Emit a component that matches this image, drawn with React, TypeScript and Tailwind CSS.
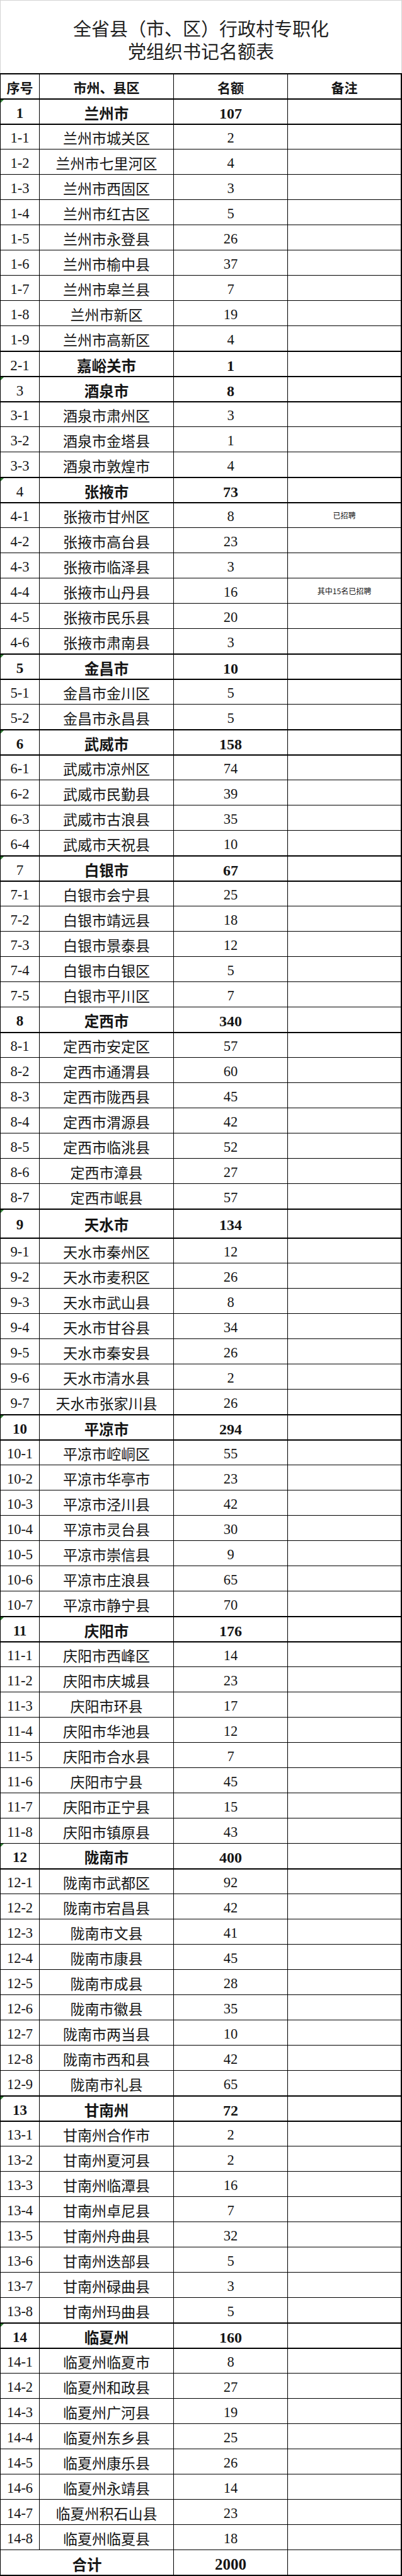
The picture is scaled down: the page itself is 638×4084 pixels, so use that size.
import React from "react";

type Item = [string, string, string?];
type Group = {
  seq: string;
  name: string;
  num: string;
  sb?: boolean;
  tri?: boolean;
  thinTop?: boolean;
  tall?: boolean;
  items: Item[];
};

const groups: Group[] = [
  {
    seq: "1", name: "兰州市", num: "107", sb: true, tri: true,
    items: [
      ["兰州市城关区", "2"], ["兰州市七里河区", "4"], ["兰州市西固区", "3"], ["兰州市红古区", "5"],
      ["兰州市永登县", "26"], ["兰州市榆中县", "37"], ["兰州市皋兰县", "7"], ["兰州市新区", "19"], ["兰州市高新区", "4"],
    ],
  },
  { seq: "2-1", name: "嘉峪关市", num: "1", items: [] },
  {
    seq: "3", name: "酒泉市", num: "8", tri: true,
    items: [["酒泉市肃州区", "3"], ["酒泉市金塔县", "1"], ["酒泉市敦煌市", "4"]],
  },
  {
    seq: "4", name: "张掖市", num: "73", tri: true,
    items: [
      ["张掖市甘州区", "8", "已招聘"], ["张掖市高台县", "23"], ["张掖市临泽县", "3"],
      ["张掖市山丹县", "16", "其中15名已招聘"], ["张掖市民乐县", "20"], ["张掖市肃南县", "3"],
    ],
  },
  { seq: "5", name: "金昌市", num: "10", sb: true, tri: true, items: [["金昌市金川区", "5"], ["金昌市永昌县", "5"]] },
  {
    seq: "6", name: "武威市", num: "158", sb: true, tri: true,
    items: [["武威市凉州区", "74"], ["武威市民勤县", "39"], ["武威市古浪县", "35"], ["武威市天祝县", "10"]],
  },
  {
    seq: "7", name: "白银市", num: "67", tri: true,
    items: [["白银市会宁县", "25"], ["白银市靖远县", "18"], ["白银市景泰县", "12"], ["白银市白银区", "5"], ["白银市平川区", "7"]],
  },
  {
    seq: "8", name: "定西市", num: "340", sb: true, thinTop: true,
    items: [
      ["定西市安定区", "57"], ["定西市通渭县", "60"], ["定西市陇西县", "45"], ["定西市渭源县", "42"],
      ["定西市临洮县", "52"], ["定西市漳县", "27"], ["定西市岷县", "57"],
    ],
  },
  {
    seq: "9", name: "天水市", num: "134", sb: true, tri: true, tall: true,
    items: [
      ["天水市秦州区", "12"], ["天水市麦积区", "26"], ["天水市武山县", "8"], ["天水市甘谷县", "34"],
      ["天水市秦安县", "26"], ["天水市清水县", "2"], ["天水市张家川县", "26"],
    ],
  },
  {
    seq: "10", name: "平凉市", num: "294", sb: true, tri: true,
    items: [
      ["平凉市崆峒区", "55"], ["平凉市华亭市", "23"], ["平凉市泾川县", "42"], ["平凉市灵台县", "30"],
      ["平凉市崇信县", "9"], ["平凉市庄浪县", "65"], ["平凉市静宁县", "70"],
    ],
  },
  {
    seq: "11", name: "庆阳市", num: "176", sb: true, tri: true,
    items: [
      ["庆阳市西峰区", "14"], ["庆阳市庆城县", "23"], ["庆阳市环县", "17"], ["庆阳市华池县", "12"],
      ["庆阳市合水县", "7"], ["庆阳市宁县", "45"], ["庆阳市正宁县", "15"], ["庆阳市镇原县", "43"],
    ],
  },
  {
    seq: "12", name: "陇南市", num: "400", sb: true, tri: true, thinTop: true,
    items: [
      ["陇南市武都区", "92"], ["陇南市宕昌县", "42"], ["陇南市文县", "41"], ["陇南市康县", "45"],
      ["陇南市成县", "28"], ["陇南市徽县", "35"], ["陇南市两当县", "10"], ["陇南市西和县", "42"], ["陇南市礼县", "65"],
    ],
  },
  {
    seq: "13", name: "甘南州", num: "72", sb: true, tri: true,
    items: [
      ["甘南州合作市", "2"], ["甘南州夏河县", "2"], ["甘南州临潭县", "16"], ["甘南州卓尼县", "7"],
      ["甘南州舟曲县", "32"], ["甘南州迭部县", "5"], ["甘南州碌曲县", "3"], ["甘南州玛曲县", "5"],
    ],
  },
  {
    seq: "14", name: "临夏州", num: "160", sb: true, tri: true,
    items: [
      ["临夏州临夏市", "8"], ["临夏州和政县", "27"], ["临夏州广河县", "19"], ["临夏州东乡县", "25"],
      ["临夏州康乐县", "26"], ["临夏州永靖县", "14"], ["临夏州积石山县", "23"], ["临夏州临夏县", "18"],
    ],
  },
];

const cell = "flex items-center justify-center border-r border-black";

function Tri() {
  return (
    <div className="absolute left-0 top-0 h-0 w-0 border-t-[5px] border-r-[5px] border-t-[#2e7d32] border-r-transparent" />
  );
}

function GroupRow({ g }: { g: Group }) {
  return (
    <div
      className={`relative grid grid-cols-[62px_213px_181px_1fr] border-l border-r-2 border-black ${
        g.thinTop ? "border-t" : "border-t-2"
      } ${g.tall ? "h-[46px]" : "h-[40px]"}`}
    >
      {g.tri && <Tri />}
      <div
        className={`${cell} pt-[4px] font-['Liberation_Serif','Noto_Sans_CJK_SC',serif] text-[23px] ${
          g.sb ? "font-bold" : "font-normal"
        }`}
      >
        {g.seq}
      </div>
      <div className={`${cell} pt-[3px] font-['Noto_Sans_CJK_SC',sans-serif] text-[23.5px] font-bold`}>{g.name}</div>
      <div className={`${cell} pt-[4px] font-['Liberation_Serif',serif] text-[24px] font-bold`}>{g.num}</div>
      <div className="flex items-center justify-center" />
    </div>
  );
}

function ItemRow({ seq, item, thick }: { seq: string; item: Item; thick: boolean }) {
  return (
    <div
      className={`relative grid h-[40px] grid-cols-[62px_213px_181px_1fr] border-l border-r-2 border-black ${
        thick ? "border-t-2" : "border-t"
      }`}
    >
      <div className={`${cell} pt-[4px] font-['Liberation_Serif',serif] text-[22.5px]`}>{seq}</div>
      <div className={`${cell} pt-[3px] font-['Noto_Sans_CJK_SC',sans-serif] text-[23px] font-normal`}>{item[0]}</div>
      <div className={`${cell} pt-[4px] font-['Liberation_Serif',serif] text-[22.5px]`}>{item[1]}</div>
      <div className="flex items-center justify-center font-['Noto_Sans_CJK_SC',sans-serif] text-[12px]">
        {item[2] ?? ""}
      </div>
    </div>
  );
}

export default function App() {
  return (
    <div className="w-[638px] bg-white text-[#151515]">
      <div className="flex h-[116px] flex-col items-center justify-center border border-b-0 border-[#d4d4d4] pt-[6px] font-['Noto_Sans_CJK_SC',sans-serif] text-[29px] leading-[36px] text-[#222]">
        <div>全省县（市、区）行政村专职化</div>
        <div>党组织书记名额表</div>
      </div>
      <div className="flex flex-col">
        <div className="grid h-[40px] grid-cols-[62px_213px_181px_1fr] border-l border-r-2 border-t-2 border-black font-['Noto_Sans_CJK_SC',sans-serif] text-[21px] font-bold">
          <div className={`${cell} pt-[3px]`}>序号</div>
          <div className={`${cell} pt-[3px]`}>市州、县区</div>
          <div className={`${cell} pt-[3px]`}>名额</div>
          <div className="flex items-center justify-center pt-[3px]">备注</div>
        </div>
        {groups.map((g) => (
          <React.Fragment key={g.seq}>
            <GroupRow g={g} />
            {g.items.map((it, i) => (
              <ItemRow key={it[0]} seq={`${g.seq}-${i + 1}`} item={it} thick={i === 0} />
            ))}
          </React.Fragment>
        ))}
        <div className="grid h-[42px] grid-cols-[62px_213px_181px_1fr] border-b-2 border-l border-r-2 border-t border-black">
          <div className={`${cell} col-span-2 pt-[3px] font-['Noto_Sans_CJK_SC',sans-serif] text-[23.5px] font-bold`}>
            合计
          </div>
          <div className={`${cell} pt-[4px] font-['Liberation_Serif',serif] text-[25px] font-bold`}>2000</div>
          <div />
        </div>
      </div>
    </div>
  );
}
